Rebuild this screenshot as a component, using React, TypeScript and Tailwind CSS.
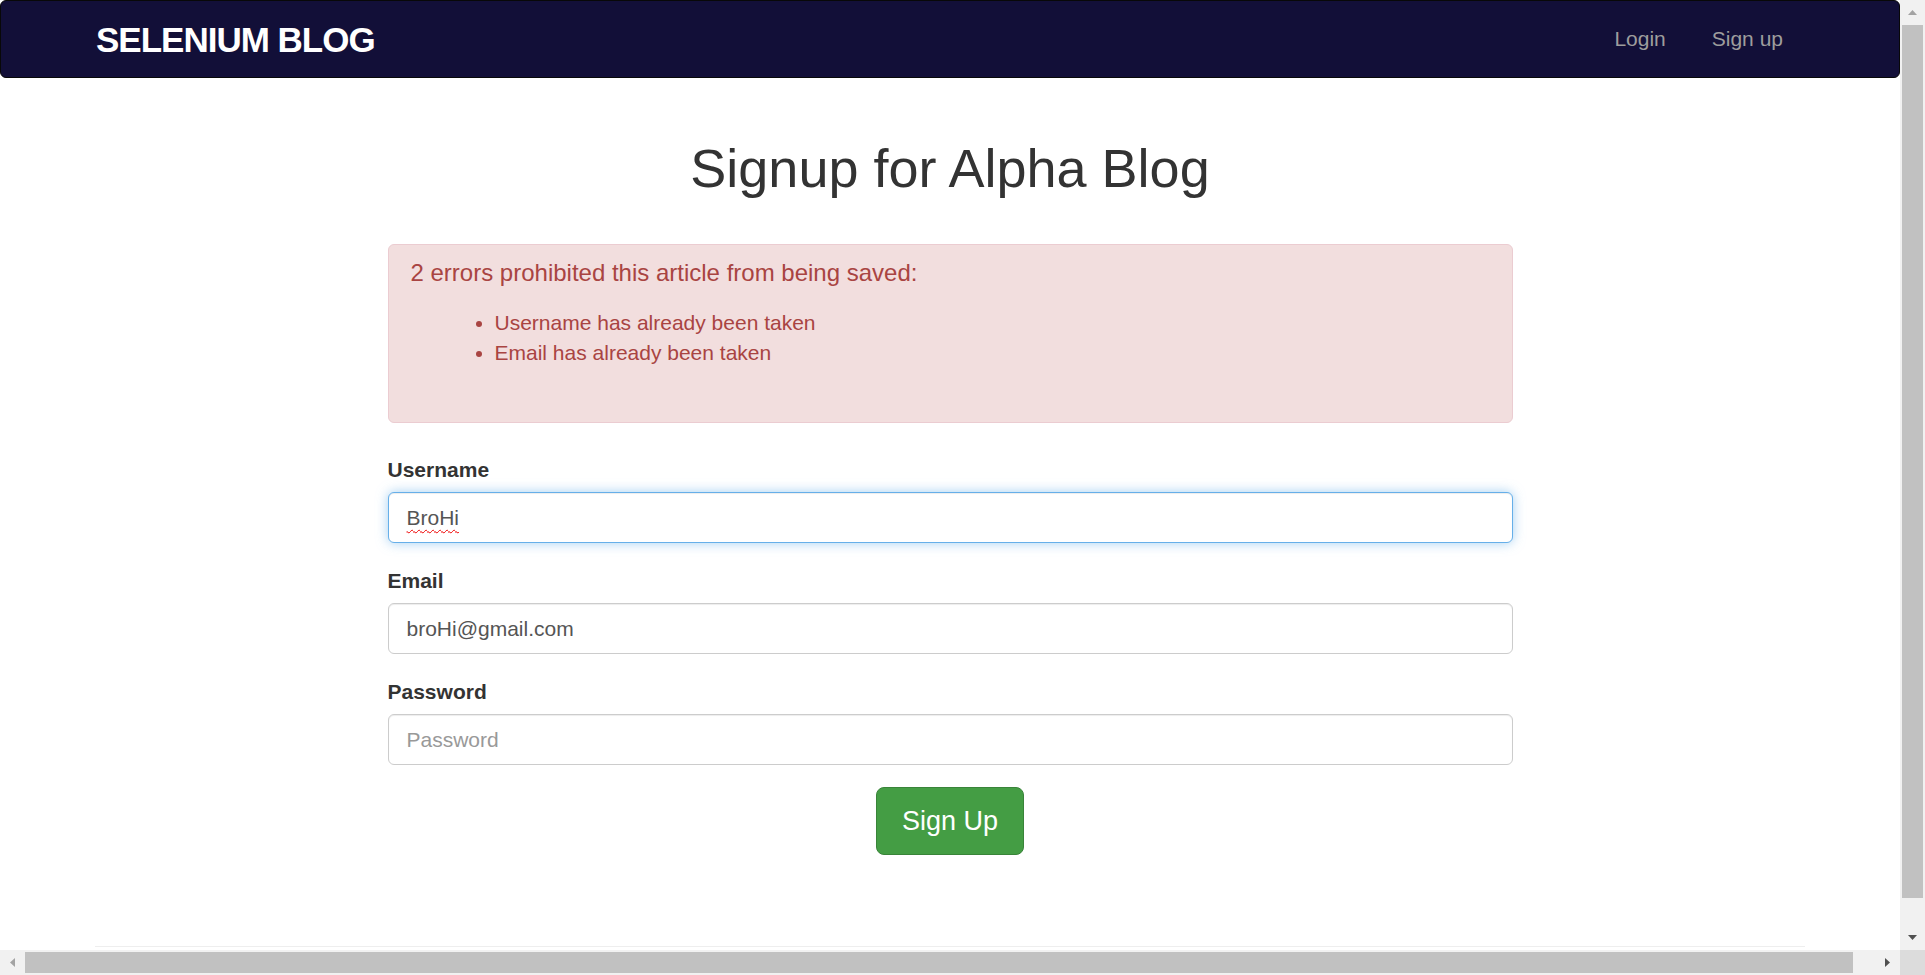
import React from 'react'

const Arrow = ({ dir, color }: { dir: 'up' | 'down' | 'left' | 'right'; color: string }) => {
  const pts = {
    up: '0,5 4.5,0 9,5',
    down: '0,0 9,0 4.5,5',
    left: '5,0 5,9 0,4.5',
    right: '0,0 0,9 5,4.5',
  }[dir]
  const w = dir === 'up' || dir === 'down' ? 9 : 5
  const h = dir === 'up' || dir === 'down' ? 5 : 9
  return (
    <svg width={w} height={h} viewBox={`0 0 ${w} ${h}`}>
      <polygon points={pts} fill={color} />
    </svg>
  )
}

export default function App() {
  return (
    <div className="w-[1925px] h-[975px] overflow-hidden flex flex-col bg-white font-['Liberation_Sans',Arial,sans-serif] text-[#333]">
      <div className="flex h-[950px]">
        {/* page */}
        <div className="w-[1900px] h-[950px] overflow-hidden">
          <nav className="h-[78px] bg-[#120f38] border border-[#080808] rounded-[6px] flex items-center justify-between pl-[95px] pr-[116px]">
            <span className="text-white font-bold text-[35px] leading-none tracking-[-1px]">SELENIUM BLOG</span>
            <div className="flex items-center gap-[46px] text-[21px] leading-[30px] text-[#9d9d9d]">
              <a href="#">Login</a>
              <a href="#">Sign up</a>
            </div>
          </nav>

          <h1 className="mt-[61px] text-center text-[54px] leading-[59.4px] font-normal text-[#333]">Signup for Alpha Blog</h1>

          <div className="w-[1125px] mx-auto mt-[46px]">
            <div className="h-[179px] bg-[#f2dede] border border-[#ebccd1] rounded-[6px] px-[22px] pt-[15px] text-[#a94442]">
              <h4 className="text-[24px] leading-[26px]">2 errors prohibited this article from being saved:</h4>
              <ul className="list-disc pl-[84px] mt-[22px] text-[21px] leading-[30px]">
                <li>Username has already been taken</li>
                <li>Email has already been taken</li>
              </ul>
            </div>

            <form className="mt-[32px] text-[21px]">
              <div className="mb-[23px]">
                <label className="block font-bold leading-[30px] mb-[7px]">Username</label>
                <div className="h-[51px] border border-[#66afe9] rounded-[6px] px-[18px] flex items-center text-[#555] bg-white shadow-[inset_0_1px_1px_rgba(0,0,0,0.075),0_0_12px_rgba(102,175,233,0.6)]">
                  <span className="underline decoration-wavy decoration-[#e00] decoration-1 underline-offset-[4px]">BroHi</span>
                </div>
              </div>
              <div className="mb-[23px]">
                <label className="block font-bold leading-[30px] mb-[7px]">Email</label>
                <input
                  readOnly
                  defaultValue="broHi@gmail.com"
                  className="w-full h-[51px] border border-[#ccc] rounded-[6px] px-[18px] text-[21px] text-[#555] outline-none shadow-[inset_0_1px_1px_rgba(0,0,0,0.075)]"
                />
              </div>
              <div className="mb-[22px]">
                <label className="block font-bold leading-[30px] mb-[7px]">Password</label>
                <input
                  readOnly
                  type="password"
                  placeholder="Password"
                  className="w-full h-[51px] border border-[#ccc] rounded-[6px] px-[18px] text-[21px] text-[#555] placeholder:text-[#999] outline-none shadow-[inset_0_1px_1px_rgba(0,0,0,0.075)]"
                />
              </div>
              <div className="text-center">
                <button
                  type="button"
                  className="bg-[#449d44] border border-[#398439] rounded-[8px] text-white text-[27px] leading-[36px] px-[25px] py-[15px]"
                >
                  Sign Up
                </button>
              </div>
            </form>
          </div>

          <div className="w-[1710px] mx-auto mt-[91px] border-t border-[#eee]" />
        </div>

        {/* vertical scrollbar */}
        <div className="w-[25px] h-[950px] bg-[#f1f1f1] flex flex-col items-center">
          <div className="h-[25px] flex items-center justify-center">
            <Arrow dir="up" color="#a3a3a3" />
          </div>
          <div className="w-[21px] h-[873px] bg-[#c1c1c1]" />
          <div className="flex-1" />
          <div className="h-[25px] flex items-center justify-center">
            <Arrow dir="down" color="#505050" />
          </div>
        </div>
      </div>

      {/* horizontal scrollbar */}
      <div className="flex h-[25px]">
        <div className="w-[1900px] h-[25px] bg-[#f1f1f1] flex items-center">
          <div className="w-[25px] flex items-center justify-center">
            <Arrow dir="left" color="#a3a3a3" />
          </div>
          <div className="w-[1828px] h-[21px] bg-[#c1c1c1]" />
          <div className="flex-1" />
          <div className="w-[25px] flex items-center justify-center">
            <Arrow dir="right" color="#505050" />
          </div>
        </div>
        <div className="w-[25px] h-[25px] bg-[#dcdcdc]" />
      </div>
    </div>
  )
}
